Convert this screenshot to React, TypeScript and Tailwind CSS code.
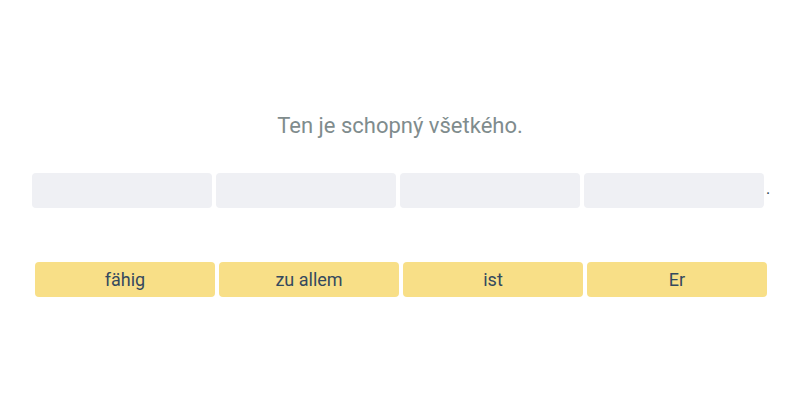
const slots = [0, 1, 2, 3];
const words = ["fähig", "zu allem", "ist", "Er"];

export default function App() {
  return (
    <div
      className="w-[800px] h-[400px] bg-white flex flex-col items-center"
      style={{ fontFamily: "Roboto, 'Liberation Sans', sans-serif" }}
    >
      <p className="mt-[111px] text-[22px] leading-[30px] text-[#7f8c8d]">
        Ten je schopný všetkého.
      </p>
      <div className="mt-[32px] ml-[2px] flex items-center">
        <div className="flex gap-1">
          {slots.map((s) => (
            <div key={s} className="w-[180px] h-[35px] rounded bg-[#eff0f4]" />
          ))}
        </div>
        <span className="ml-[2px] mb-[4px] text-[16px] leading-[22px] text-[#2c3e50]">.</span>
      </div>
      <div className="mt-[54px] ml-[2px] flex gap-1">
        {words.map((w) => (
          <div
            key={w}
            className="w-[180px] h-[35px] rounded bg-[#f8df87] flex items-center justify-center text-[18px] text-[#34495e]"
          >
            {w}
          </div>
        ))}
      </div>
    </div>
  );
}
